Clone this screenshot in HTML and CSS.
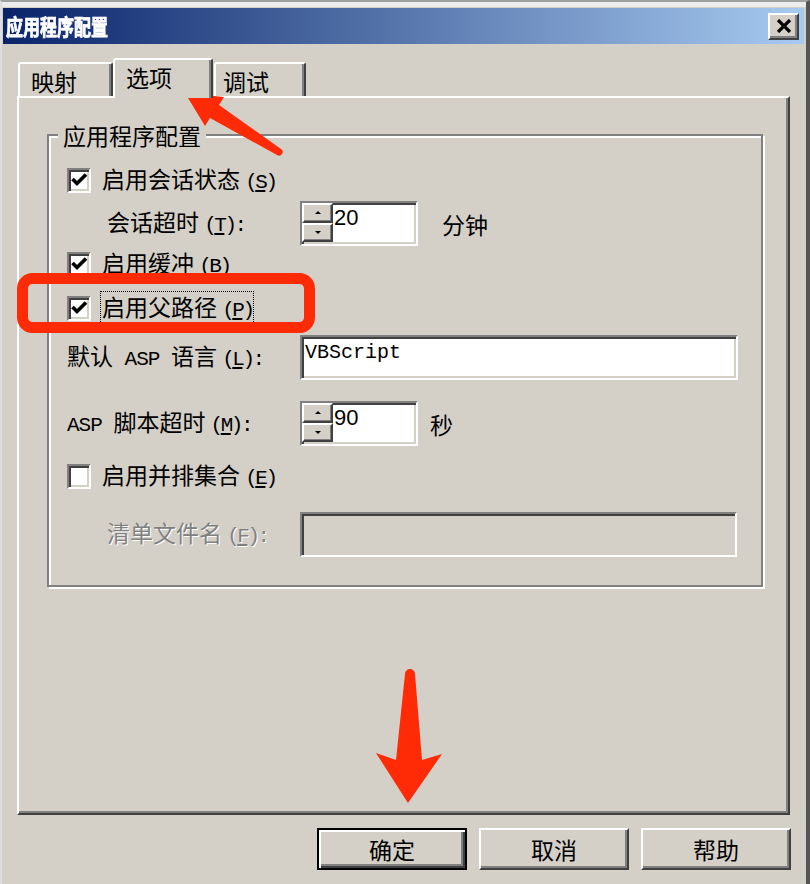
FILE: index.html
```html
<!DOCTYPE html>
<html lang="zh-CN">
<head>
<meta charset="utf-8">
<title>应用程序配置</title>
<link rel="stylesheet" href="styles.css">
</head>
<body>
<div class="window">
  <div class="titlebar">
    <span class="title">应用程序配置</span>
    <span class="close"><svg width="16" height="14" viewBox="0 0 16 14"><path d="M2 1 L14 13 M14 1 L2 13" stroke="#000" stroke-width="3.2" fill="none"/></svg></span>
  </div>
  <div class="tabs">
    <div class="tab t1">映射</div>
    <div class="tab t2">选项</div>
    <div class="tab t3">调试</div>
  </div>
  <div class="panel">
    <div class="group">
      <div class="group-title">应用程序配置</div>

      <div class="row r-cb mt16">
        <span class="cb"><svg width="20" height="21" viewBox="0 0 20 21"><polyline points="3.5,9 8,13.5 17,4.5" stroke="#000" stroke-width="3.6" fill="none"/></svg></span>
        <span class="lbl">启用会话状态 <span class="key">(<u>S</u>)</span></span>
      </div>

      <div class="row r-field mt5">
        <span class="label-col indent">会话超时 <span class="key">(<u>T</u>):</span></span>
        <div class="spin">
          <div class="spin-btns">
            <span class="spin-btn"><span class="tri-up"></span></span>
            <span class="spin-btn"><span class="tri-down"></span></span>
          </div>
          <span class="spin-val">20</span>
        </div>
        <span class="unit">分钟</span>
      </div>

      <div class="row r-cb mt2">
        <span class="cb"><svg width="20" height="21" viewBox="0 0 20 21"><polyline points="3.5,9 8,13.5 17,4.5" stroke="#000" stroke-width="3.6" fill="none"/></svg></span>
        <span class="lbl">启用缓冲 <span class="key">(<u>B</u>)</span></span>
      </div>

      <div class="row r-cb mt12">
        <span class="cb"><svg width="20" height="21" viewBox="0 0 20 21"><polyline points="3.5,9 8,13.5 17,4.5" stroke="#000" stroke-width="3.6" fill="none"/></svg></span>
        <span class="lbl focus">启用父路径 <span class="key">(<u>P</u>)</span></span>
      </div>

      <div class="row r-field mt11">
        <span class="label-col">默认<span class="mono"> ASP </span>语言 <span class="key">(<u>L</u>):</span></span>
        <div class="textbox">VBScript</div>
      </div>

      <div class="row r-field mt21">
        <span class="label-col"><span class="mono">ASP </span>脚本超时 <span class="key">(<u>M</u>):</span></span>
        <div class="spin">
          <div class="spin-btns">
            <span class="spin-btn"><span class="tri-up"></span></span>
            <span class="spin-btn"><span class="tri-down"></span></span>
          </div>
          <span class="spin-val">90</span>
        </div>
        <span class="unit-s">秒</span>
      </div>

      <div class="row r-cb mt14">
        <span class="cb"></span>
        <span class="lbl">启用并排集合 <span class="key">(<u>E</u>)</span></span>
      </div>

      <div class="row r-field mt20">
        <span class="label-col indent disabled-lbl">清单文件名 <span class="key">(<u>F</u>):</span></span>
        <div class="textbox disabled"></div>
      </div>
    </div>
  </div>
  <div class="buttons">
    <span class="btn default">确定</span>
    <span class="btn">取消</span>
    <span class="btn">帮助</span>
  </div>
</div>

<svg class="annot" width="810" height="884" viewBox="0 0 810 884">
  <rect x="22.5" y="278.5" width="287" height="49" rx="10" fill="none" stroke="#ff2a06" stroke-width="11"/>
  <path d="M185,93 L224,97 L219,105 L281,149 A3.6,3.6 0 0 1 277,155 L210,118 L205,126 Z" fill="#ff2a06"/>
  <path d="M405,674 A5,5 0 0 1 415,674 L422,760 L442,754 L408,803 L376,753 L396,760 Z" fill="#ff2a06"/>
</svg>
</body>
</html>
```

FILE: styles.css
```css
* { box-sizing: border-box; }
html, body { margin: 0; padding: 0; }
body {
  width: 810px;
  height: 884px;
  overflow: hidden;
  position: relative;
  background: #d4d0c8;
  font-family: "Noto Sans CJK SC", sans-serif;
  font-size: 23px;
  line-height: 26px;
  color: #000;
}
.window {
  width: 810px;
  height: 884px;
  background: #d4d0c8;
  border-top: 2px solid #a0a0a0;
  border-left: 2px solid #dedede;
  border-right: 4px solid #555;
  box-shadow: inset 0 5px 0 #ececec;
  display: flex;
  flex-direction: column;
}
.titlebar {
  margin: 6px 2px 0 1px;
  height: 36px;
  flex: none;
  background: linear-gradient(to right, #0a246a, #a6caf0);
  display: flex;
  align-items: center;
  justify-content: space-between;
  padding-left: 3px;
}
.title {
  color: #fff;
  font-weight: 700;
  font-size: 17px;
  letter-spacing: 0;
  display: inline-block;
  transform: scaleY(1.25);
  -webkit-text-stroke: 0.6px #fff;
}
.close {
  width: 31px;
  height: 27px;
  margin-right: 5px;
  background: #d4d0c8;
  border-top: 2px solid #fff;
  border-left: 2px solid #fff;
  border-right: 2px solid #404040;
  border-bottom: 2px solid #404040;
  box-shadow: inset -2px -2px #808080;
  display: flex;
  align-items: center;
  justify-content: center;
}
.close svg { display: block; }

.tabs {
  display: flex;
  align-items: flex-end;
  margin: 14px 0 0 16px;
  flex: none;
}
.tab {
  height: 34px;
  background: #d4d0c8;
  border-top: 2px solid #fff;
  border-left: 2px solid #fff;
  border-right: 2px solid #404040;
  box-shadow: inset -2px 0 #808080;
  border-radius: 3px 3px 0 0;
  padding-top: 4px;
}
.t1 { width: 95px; padding-left: 11px; }
.t2 {
  width: 100px;
  height: 40px;
  margin-bottom: -2px;
  padding-left: 11px;
  position: relative;
  z-index: 1;
}
.t3 { width: 92px; margin-left: 1px; padding-left: 7px; }

.panel {
  margin: 0 16px 0 15px;
  height: 719px;
  flex: none;
  border-top: 2px solid #fff;
  border-left: 2px solid #fff;
  border-right: 2px solid #404040;
  border-bottom: 2px solid #404040;
  box-shadow: inset -2px -2px #808080;
  padding-top: 36px;
}
.group {
  margin: 0 25px 0 28px;
  border: 2px solid #808080;
  box-shadow: inset 2px 2px #fff, 2px 2px #fff;
  padding: 0 0 28px 18px;
}
.group-title {
  margin: -14px 0 0 -9px;
  padding: 0 5px;
  width: fit-content;
  background: #d4d0c8;
  height: 26px;
}
.row { display: flex; align-items: center; }
.r-cb { height: 32px; }
.r-field { height: 45px; }
.mt2 { margin-top: 2px; }
.mt5 { margin-top: 5px; }
.mt11 { margin-top: 11px; }
.mt12 { margin-top: 12px; }
.mt14 { margin-top: 14px; }
.mt16 { margin-top: 16px; }
.mt20 { margin-top: 20px; }
.mt21 { margin-top: 21px; }

.cb {
  width: 24px;
  height: 25px;
  flex: none;
  background: #fff;
  border-style: solid;
  border-width: 2px;
  border-color: #808080 #fff #fff #808080;
  box-shadow: inset 2px 2px #404040, inset -2px -2px #d4d0c8;
  margin-right: 11px;
}
.cb svg { display: block; }
.lbl { white-space: nowrap; }
.lbl.focus {
  margin-left: -2px;
  padding: 1px 1px 1px 1px;
  border: 1px dotted #000;
}
.key {
  font-family: "Liberation Mono", monospace;
  font-size: 21px;
  letter-spacing: -2.5px;
}
.mono {
  font-family: "Liberation Mono", monospace;
  font-size: 21px;
  letter-spacing: -1px;
  white-space: pre;
}
.label-col { width: 233px; flex: none; white-space: nowrap; }
.indent { padding-left: 40px; }
.disabled-lbl { color: #808080; text-shadow: 1px 1px 0 #fff; }

.spin {
  width: 118px;
  height: 45px;
  flex: none;
  display: flex;
  background: #fff;
  border-style: solid;
  border-width: 2px;
  border-color: #808080 #fff #fff #808080;
  box-shadow: inset 2px 2px #404040, inset -2px -2px #d4d0c8;
}
.spin-btns {
  width: 31px;
  display: flex;
  flex-direction: column;
  padding-bottom: 2px;
}
.spin-btn {
  flex: 1;
  background: #d4d0c8;
  border-top: 2px solid #fff;
  border-left: 2px solid #fff;
  border-right: 2px solid #404040;
  border-bottom: 2px solid #404040;
  box-shadow: inset -1px -1px #808080;
  display: flex;
  align-items: center;
  justify-content: center;
}
.tri-up {
  width: 0; height: 0;
  border-left: 3px solid transparent;
  border-right: 3px solid transparent;
  border-bottom: 3px solid #000;
}
.tri-down {
  width: 0; height: 0;
  border-left: 3px solid transparent;
  border-right: 3px solid transparent;
  border-top: 3px solid #000;
}
.spin-val {
  font-family: "Liberation Sans", sans-serif;
  font-size: 22px;
  line-height: 26px;
  padding: 2px 0 0 1px;
}
.unit { margin-left: 24px; }
.unit-s { margin-left: 12px; }

.textbox {
  width: 438px;
  height: 45px;
  flex: none;
  background: #fff;
  border-style: solid;
  border-width: 2px;
  border-color: #808080 #fff #fff #808080;
  box-shadow: inset 2px 2px #404040, inset -2px -2px #d4d0c8;
  font-family: "Liberation Mono", monospace;
  font-size: 20px;
  line-height: 24px;
  padding: 4px 0 0 3px;
}
.textbox.disabled { width: 437px; background: #d4d0c8; }

.buttons {
  display: flex;
  justify-content: flex-end;
  gap: 12px;
  margin: 13px 15px 0 0;
}
.btn {
  width: 150px;
  height: 42px;
  background: #d4d0c8;
  border-top: 2px solid #fff;
  border-left: 2px solid #fff;
  border-right: 2px solid #404040;
  border-bottom: 2px solid #404040;
  box-shadow: inset -2px -2px #808080;
  display: flex;
  align-items: center;
  justify-content: center;
}
.btn.default {
  border: 2px solid #000;
  box-shadow: inset 2px 2px #fff, inset -2px -2px #404040, inset -4px -4px #808080;
}

.annot {
  position: absolute;
  left: 0;
  top: 0;
  pointer-events: none;
}
```
